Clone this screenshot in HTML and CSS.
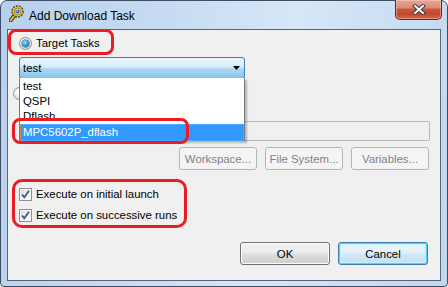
FILE: index.html
```html
<!DOCTYPE html>
<html>
<head>
<meta charset="utf-8">
<title>Add Download Task</title>
<link rel="stylesheet" href="styles.css">
</head>
<body>
<div class="window">
  <div class="titlebar">
    <svg class="app-icon" width="15" height="17" viewBox="0 0 15 17">
      <path d="M5 11 L1.5 15.5" stroke="#3a3320" stroke-width="4" stroke-linecap="round"/>
      <path d="M5 11 L1.5 15.5" stroke="#e9c84a" stroke-width="2" stroke-linecap="round"/>
      <circle cx="8.5" cy="6.5" r="5.6" fill="#e8c440" stroke="#3a3320" stroke-width="1.2" stroke-dasharray="2 1"/>
      <circle cx="8.5" cy="6.5" r="3.4" fill="#f7e27a" stroke="#8a6a10" stroke-width="0.8"/>
      <circle cx="8.5" cy="6.5" r="2.1" fill="#2f6fb8"/>
      <circle cx="8" cy="6" r="0.8" fill="#bfe0ff"/>
    </svg>
    <span class="title">Add Download Task</span>
    <div class="close">
      <svg width="14" height="11" viewBox="0 0 14 11">
        <path d="M3 2 L11 9 M11 2 L3 9" stroke="#3b3b3b" stroke-width="4" stroke-linecap="square"/>
        <path d="M3 2 L11 9 M11 2 L3 9" stroke="#ffffff" stroke-width="2" stroke-linecap="square"/>
      </svg>
    </div>
  </div>
  <div class="client">
    <div class="radio-row">
      <span class="radio radio-on"></span>
      <span class="label">Target Tasks</span>
    </div>
    <div class="combo">
      <span class="combo-text">test</span>
      <svg class="combo-arrow" width="7" height="4" viewBox="0 0 7 4"><path d="M0 0 H7 L3.5 4 Z" fill="#000"/></svg>
    </div>
    <div class="radio-row radio-row-host">
      <span class="radio"></span>
    </div>
    <div class="textfield"></div>
    <div class="browse-row">
      <button class="btn btn-disabled">Workspace...</button>
      <button class="btn btn-disabled">File System...</button>
      <button class="btn btn-disabled">Variables...</button>
    </div>
    <div class="checks">
      <div class="check-row">
        <span class="checkbox"><svg width="11" height="11" viewBox="0 0 11 11"><path d="M2 5.5 L4.3 8.3 L9 1.8" fill="none" stroke="#3d548f" stroke-width="1.7"/></svg></span>
        <span class="label">Execute on initial launch</span>
      </div>
      <div class="check-row">
        <span class="checkbox"><svg width="11" height="11" viewBox="0 0 11 11"><path d="M2 5.5 L4.3 8.3 L9 1.8" fill="none" stroke="#3d548f" stroke-width="1.7"/></svg></span>
        <span class="label">Execute on successive runs</span>
      </div>
    </div>
    <div class="spacer"></div>
    <div class="dialog-buttons">
      <button class="btn btn-normal">OK</button>
      <button class="btn btn-default">Cancel</button>
    </div>

    <ul class="dropdown">
      <li class="item">test</li>
      <li class="item">QSPI</li>
      <li class="item">Dflash</li>
      <li class="item item-selected">MPC5602P_dflash</li>
    </ul>

    <div class="mark mark-target"></div>
    <div class="mark mark-item"></div>
    <div class="mark mark-checks"></div>
  </div>
</div>
</body>
</html>
```

FILE: styles.css
```css
* { box-sizing: border-box; }

html, body {
  margin: 0;
  padding: 0;
  width: 448px;
  height: 287px;
  overflow: hidden;
  background: #ffffff;
}

body {
  font-family: "Liberation Sans", Arial, sans-serif;
  font-size: 11.4px;
  color: #000;
}

.window {
  width: 448px;
  height: 287px;
  display: flex;
  flex-direction: column;
  border: 1px solid #3f4e63;
  border-radius: 7px 7px 4px 4px;
  padding: 0 6px 5px 6px;
  background: linear-gradient(100deg, #b7d0ed 0%, #c7dcf3 35%, #d7e6f7 60%, #c0d7f0 100%);
}

.titlebar {
  height: 28px;
  flex: none;
  display: flex;
  align-items: flex-start;
}

.app-icon {
  margin: 4px 0 0 2px;
  flex: none;
}

.title {
  margin: 8px 0 0 5px;
  font-size: 12px;
  line-height: 14px;
  color: #000;
  flex: 1;
}

.close {
  width: 47px;
  height: 20px;
  margin: -1px -1px 0 0;
  border: 1px solid #5e2a22;
  border-top: none;
  border-radius: 0 0 5px 5px;
  background: linear-gradient(to bottom, #e6a897 0%, #d98b78 40%, #c8553a 50%, #c2472d 75%, #d36a4c 100%);
  box-shadow: inset 0 0 0 1px rgba(255, 210, 200, 0.45);
  display: flex;
  align-items: center;
  justify-content: center;
}

.client {
  position: relative;
  height: 252px;
  flex: none;
  display: flex;
  flex-direction: column;
  align-items: flex-start;
  background: #f0f0f0;
  border: 1px solid #56657a;
  padding: 7px 11px 15px 11px;
}

.radio-row {
  display: flex;
  align-items: center;
  height: 13px;
  gap: 4px;
}

.radio-row .label { line-height: 13px; }

.radio {
  width: 13px;
  height: 13px;
  border-radius: 50%;
  border: 1px solid #8e8f8f;
  background: radial-gradient(circle at 40% 35%, #ffffff 0%, #e6e6e6 60%, #cfcfcf 100%);
  flex: none;
  display: flex;
  align-items: center;
  justify-content: center;
}

.radio-on::after {
  content: "";
  width: 7px;
  height: 7px;
  border-radius: 50%;
  background: radial-gradient(circle at 40% 35%, #a8e4ff 0%, #3aa0dc 45%, #154f86 100%);
  box-shadow: 0 0 0 0.5px #1a4670;
}

.combo {
  margin-top: 7px;
  width: 226px;
  height: 22px;
  border: 1px solid #3c7fb1;
  border-radius: 3px;
  background: linear-gradient(to bottom, #eef7fd 0%, #d6edfa 45%, #b0daf3 52%, #87c2e6 100%);
  display: flex;
  align-items: center;
  justify-content: space-between;
  padding: 0 3px 0 3px;
  flex: none;
}

.combo-text { line-height: 14px; }

.combo-arrow { margin-right: 1px; }

.radio-row-host {
  margin-top: 8px;
  margin-left: -6px;
}

.textfield {
  margin-top: 21px;
  align-self: stretch;
  margin-left: 15px;
  margin-right: -1px;
  height: 20px;
  border: 1px solid #b5b9bd;
  border-radius: 2px;
  background: #f0f0f0;
  flex: none;
}

.browse-row {
  margin-top: 6px;
  align-self: stretch;
  display: flex;
  justify-content: flex-end;
  gap: 8px;
  flex: none;
}

.btn {
  font-family: "Liberation Sans", Arial, sans-serif;
  font-size: 11.4px;
  height: 23px;
  border-radius: 3px;
  padding: 0;
  margin: 0;
  line-height: 14px;
}

.browse-row .btn { width: 78px; }

.btn-disabled {
  border: 1px solid #b2b6ba;
  background: #f4f4f4;
  color: #838383;
}

.checks {
  margin-top: 18px;
  display: flex;
  flex-direction: column;
  gap: 8px;
  flex: none;
}

.check-row {
  display: flex;
  align-items: center;
  height: 13px;
  gap: 4px;
}

.check-row .label { line-height: 13px; }

.checkbox {
  width: 13px;
  height: 13px;
  border: 1px solid #8f8f8f;
  background: linear-gradient(135deg, #d9d9d9 0%, #f2f2f2 60%, #ffffff 100%);
  box-shadow: inset 0 0 0 1px #f4f4f4;
  display: flex;
  align-items: center;
  justify-content: center;
  flex: none;
}

.spacer { flex: 1; }

.dialog-buttons {
  align-self: stretch;
  display: flex;
  justify-content: flex-end;
  gap: 8px;
  margin-right: 1px;
  flex: none;
}

.dialog-buttons .btn { width: 90px; }

.btn-normal {
  border: 1px solid #707070;
  background: linear-gradient(to bottom, #f2f2f2 0%, #ebebeb 48%, #dddddd 52%, #cfcfcf 100%);
  box-shadow: inset 0 0 0 1px #fcfcfc;
  color: #000;
}

.btn-default {
  border: 1px solid #3c7fb1;
  background: linear-gradient(to bottom, #eaf6fd 0%, #e0f0fa 48%, #d2e8f6 52%, #c4e0f2 100%);
  box-shadow: inset 0 0 0 1px #48d6ff, inset 0 0 0 2px #c8ecfb;
  color: #000;
}

/* dropdown list overlay */
.dropdown {
  position: absolute;
  left: 11px;
  top: 48px;
  width: 226px;
  height: 63px;
  margin: 0;
  padding: 1px 0 0 0;
  list-style: none;
  background: #ffffff;
  border: 1px solid #7a7a7a;
  border-top: none;
  box-shadow: 2px 2px 2px rgba(0, 0, 0, 0.25);
}

.item {
  height: 15px;
  line-height: 15px;
  padding-left: 3px;
  white-space: nowrap;
}

.item-selected {
  height: 17px;
  line-height: 15px;
  background: #3399ff;
  color: #ffffff;
  border: 1px dotted #d89a5a;
  padding-left: 2px;
}

/* red annotation marks */
.mark {
  position: absolute;
  border: 3px solid #ec1c24;
  border-radius: 8px;
  pointer-events: none;
}

.mark-target { left: 0; top: -1px; width: 106px; height: 26px; }
.mark-item { left: 4px; top: 88px; width: 177px; height: 26px; }
.mark-checks { left: 4px; top: 149px; width: 175px; height: 49px; border-radius: 10px; }
```
